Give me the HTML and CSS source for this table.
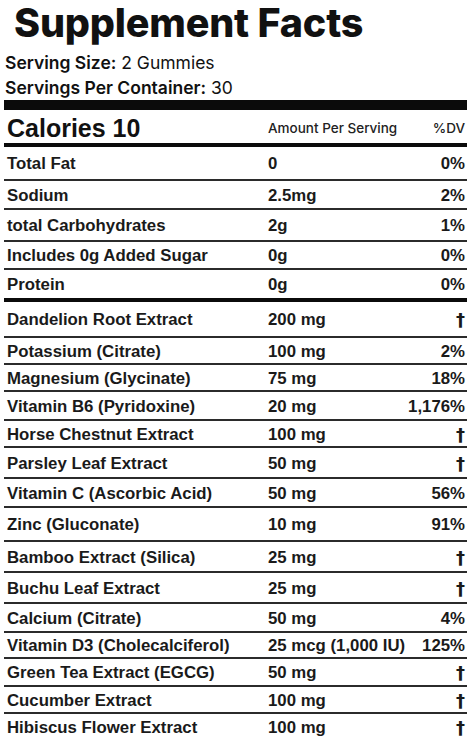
FILE: index.html
```html
<!DOCTYPE html>
<html lang="en">
<head>
  <meta charset="UTF-8">
  <title>Supplement Facts</title>
  <link rel="stylesheet" href="styles.css">
</head>
<body>

  <div class="label">
    <h1 class="title">Supplement Facts</h1>
    <p class="serving"><b>Serving Size:</b> 2 Gummies</p>
    <p class="serving"><b>Servings Per Container:</b> 30</p>

    <div class="bar"></div>

    <div class="head">
      <span class="calories">Calories 10</span>
      <span class="head-amount">Amount Per Serving</span>
      <span class="head-dv">%DV</span>
    </div>

    <div class="rows macros">
      <div class="row"><span>Total Fat</span><span>0</span><span class="dv">0%</span></div>
      <div class="row"><span>Sodium</span><span>2.5mg</span><span class="dv">2%</span></div>
      <div class="row"><span>total Carbohydrates</span><span>2g</span><span class="dv">1%</span></div>
      <div class="row"><span>Includes 0g Added Sugar</span><span>0g</span><span class="dv">0%</span></div>
      <div class="row row-end"><span>Protein</span><span>0g</span><span class="dv">0%</span></div>
    </div>

    <div class="rows extracts">
      <div class="row"><span>Dandelion Root Extract</span><span>200 mg</span><span class="dv dagger">†</span></div>
      <div class="row"><span>Potassium (Citrate)</span><span>100 mg</span><span class="dv">2%</span></div>
      <div class="row"><span>Magnesium (Glycinate)</span><span>75 mg</span><span class="dv">18%</span></div>
      <div class="row"><span>Vitamin B6 (Pyridoxine)</span><span>20 mg</span><span class="dv">1,176%</span></div>
      <div class="row"><span>Horse Chestnut Extract</span><span>100 mg</span><span class="dv dagger">†</span></div>
      <div class="row"><span>Parsley Leaf Extract</span><span>50 mg</span><span class="dv dagger">†</span></div>
      <div class="row"><span>Vitamin C (Ascorbic Acid)</span><span>50 mg</span><span class="dv">56%</span></div>
      <div class="row"><span>Zinc (Gluconate)</span><span>10 mg</span><span class="dv">91%</span></div>
      <div class="row"><span>Bamboo Extract (Silica)</span><span>25 mg</span><span class="dv dagger">†</span></div>
      <div class="row"><span>Buchu Leaf Extract</span><span>25 mg</span><span class="dv dagger">†</span></div>
      <div class="row"><span>Calcium (Citrate)</span><span>50 mg</span><span class="dv">4%</span></div>
      <div class="row"><span>Vitamin D3 (Cholecalciferol)</span><span>25 mcg (1,000 IU)</span><span class="dv">125%</span></div>
      <div class="row"><span>Green Tea Extract (EGCG)</span><span>50 mg</span><span class="dv dagger">†</span></div>
      <div class="row"><span>Cucumber Extract</span><span>100 mg</span><span class="dv dagger">†</span></div>
      <div class="row row-last"><span>Hibiscus Flower Extract</span><span>100 mg</span><span class="dv dagger">†</span></div>
    </div>
  </div>

</body>
</html>
```

FILE: styles.css
```css
body {
  margin: 0;
  background: #fff;
  color: #111;
  font-family: Inter, sans-serif;
}

.label {
  padding: 0 4px;
}

.title {
  margin: 0 0 3px;
  padding-left: 10px;
  font-size: 39.5px;
  font-weight: 800;
  line-height: 47px;
  letter-spacing: -0.2px;
}

.serving {
  margin: 0;
  padding-left: 1px;
  font-size: 17.5px;
  line-height: 25px;
}

.serving b {
  font-weight: 600;
}

.bar {
  height: 10px;
  background: #0b0b0b;
}

.head {
  display: grid;
  grid-template-columns: 261px 1fr auto;
  align-items: center;
  box-sizing: border-box;
  height: 37px;
  padding: 0 2px 0 3px;
  border-bottom: 4px solid #0b0b0b;
}

.calories {
  font-family: "Liberation Sans", Arial, sans-serif;
  font-weight: bold;
  font-size: 25px;
  padding-top: 3px;
}

.head-amount, .head-dv {
  font-size: 13.5px;
  font-weight: 500;
  color: #222;
  padding-top: 2px;
}

.rows {
  display: grid;
}

.macros {
  grid-template-rows: 34px 29px 32px 28px 32px;
}

.extracts {
  grid-template-rows: 36px 27px 27px 29px 27px 31px 29px 34px 31px 31px 29px 26px 28px 27px 25px;
}

.row {
  display: grid;
  grid-template-columns: 261px 1fr auto;
  align-items: center;
  box-sizing: border-box;
  padding: 2px 2px 0 3px;
  border-bottom: 2px solid #2b2b2b;
  font-family: "Liberation Sans", Arial, sans-serif;
  font-weight: bold;
  font-size: 16.8px;
  color: #1a1a1a;
}

.row-end {
  border-bottom: 4px solid #0b0b0b;
}

.row-last {
  border-bottom: none;
}

.dv {
  text-align: right;
}

.dagger {
  font-family: "DejaVu Sans", sans-serif;
  font-size: 18px;
  line-height: 1;
}
```
